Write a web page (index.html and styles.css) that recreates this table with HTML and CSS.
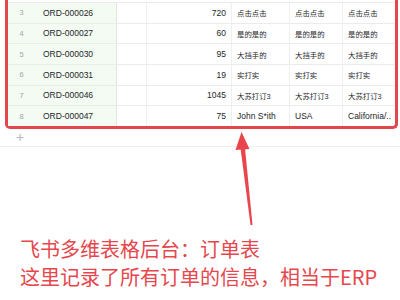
FILE: index.html
```html
<!DOCTYPE html>
<html>
<head>
<meta charset="utf-8">
<link rel="stylesheet" href="styles.css">
</head>
<body>
<div class="page">
  <div class="sheet">
    <div class="row">
      <div class="idx">3</div><div class="key">ORD-000026</div><div class="blank"></div><div class="num">720</div><div class="txt zh">点击点击</div><div class="txt zh">点击点击</div><div class="txt zh">点击点击</div>
    </div>
    <div class="row">
      <div class="idx">4</div><div class="key">ORD-000027</div><div class="blank"></div><div class="num">60</div><div class="txt zh">是的是的</div><div class="txt zh">是的是的</div><div class="txt zh">是的是的</div>
    </div>
    <div class="row">
      <div class="idx">5</div><div class="key">ORD-000030</div><div class="blank"></div><div class="num">95</div><div class="txt zh">大挡手的</div><div class="txt zh">大挡手的</div><div class="txt zh">大挡手的</div>
    </div>
    <div class="row">
      <div class="idx">6</div><div class="key">ORD-000031</div><div class="blank"></div><div class="num">19</div><div class="txt zh">实打实</div><div class="txt zh">实打实</div><div class="txt zh">实打实</div>
    </div>
    <div class="row">
      <div class="idx">7</div><div class="key">ORD-000046</div><div class="blank"></div><div class="num">1045</div><div class="txt zh">大苏打订3</div><div class="txt zh">大苏打订3</div><div class="txt zh">大苏打订3</div>
    </div>
    <div class="row last">
      <div class="idx">8</div><div class="key">ORD-000047</div><div class="blank"></div><div class="num">75</div><div class="txt">John S*ith</div><div class="txt">USA</div><div class="txt">California/..</div>
    </div>
  </div>
  <div class="addbar"><span class="plus">+</span></div>
  <div class="note">
    <p>飞书多维表格后台：订单表</p>
    <p>这里记录了所有订单的信息，相当于ERP</p>
  </div>
  <svg class="arrow" width="400" height="300" viewBox="0 0 400 300">
    <polygon points="241.5,132 235.5,150 249.5,149" fill="#e8454c"/>
    <polygon points="240.5,148 245,148 252.5,225 250.5,225" fill="#e8454c"/>
  </svg>
</div>
</body>
</html>
```

FILE: styles.css
```css
html, body {
  margin: 0;
  padding: 0;
  background: #ffffff;
}
.page {
  position: relative;
  width: 400px;
  height: 300px;
  overflow: hidden;
  font-family: "Liberation Sans", "Noto Sans CJK SC", sans-serif;
}
.sheet {
  margin-left: 5px;
  width: 387px;
  border: 3px solid #e2474b;
  border-top: none;
  border-radius: 0 0 5px 5px;
  padding-top: 2px;
  background: #ffffff;
}
.row {
  display: grid;
  grid-template-columns: 27px 82px 30px 85px 58px 53px 52px;
  height: 20.67px;
  border-top: 1px solid #ebebeb;
  box-sizing: border-box;
  font-size: 8.5px;
  color: #24262a;
}
.row > div {
  display: flex;
  align-items: center;
  white-space: nowrap;
  overflow: hidden;
}
.idx {
  justify-content: center;
  color: #a3a6ab;
  font-size: 7.5px;
  background: #f3fbf2;
}
.key {
  padding-left: 8px;
  background: #f3fbf2;
  border-right: 1px solid #dfe8dc;
}
.blank {
  border-right: 1px solid #efefef;
}
.num {
  justify-content: flex-end;
  padding-right: 5px;
  border-right: 1px solid #efefef;
}
.txt {
  padding-left: 5px;
  border-right: 1px solid #efefef;
}
.txt:last-child {
  border-right: none;
}
.zh {
  font-size: 7.4px;
}
.addbar {
  height: 17px;
  border-bottom: 1px solid #f0f0f0;
  display: flex;
  align-items: center;
  padding-left: 16px;
}
.plus {
  color: #b4b7bb;
  font-size: 14px;
  font-weight: 300;
  line-height: 1;
  margin-top: -1px;
}
.note {
  padding: 88px 0 0 20px;
  color: #e6474d;
  font-family: "Noto Sans CJK SC", sans-serif;
  font-size: 20px;
  line-height: 28px;
}
.note p {
  margin: 0;
  white-space: nowrap;
}
.arrow {
  position: absolute;
  left: 0;
  top: 0;
  pointer-events: none;
}
```
